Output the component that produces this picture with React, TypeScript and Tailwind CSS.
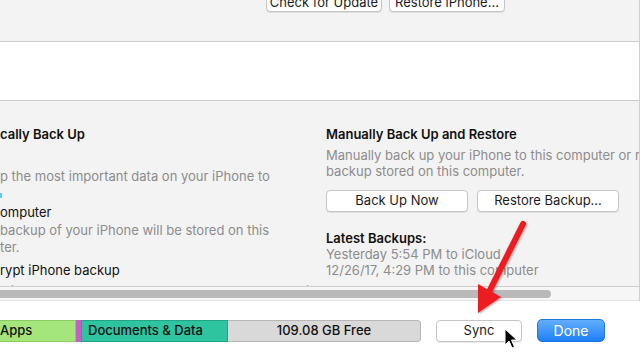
import React from 'react';

const Btn = ({ children, className = '' }: { children: React.ReactNode; className?: string }) => (
    <div className={`flex items-center justify-center h-[22px] bg-white border border-[#c5c5c5] rounded-[4px] shadow-[0_1px_0_rgba(0,0,0,0.08)] text-[13px] text-[#1c1c1c] ${className}`}>
        {children}
    </div>
);

const App = () => {
    return (
        <div className="relative w-[641px] h-[358px] overflow-hidden bg-white" style={{ fontFamily: 'Inter, "Liberation Sans", sans-serif' }}>
            <div className="w-[640px] border-r border-[#cfcfcf]">
                {/* top strip with update buttons, scrolled partly out of view */}
                <div className="h-[42px] bg-[#f3f3f3] border-b border-[#cdcdcd] flex items-start">
                    <div className="flex gap-[7px] ml-[266px] -mt-[10px]">
                        <Btn className="w-[116px] pt-[4px]">Check for Update</Btn>
                        <Btn className="w-[116px] pt-[4px]">Restore iPhone...</Btn>
                    </div>
                </div>

                {/* empty white strip */}
                <div className="h-[59px] bg-white border-b border-[#cdcdcd]" />

                {/* backups panel */}
                <div className="h-[186px] bg-[#f3f3f3] border-b border-[#cdcdcd] overflow-hidden flex pt-[25px] text-[13px] whitespace-nowrap">
                    <div className="w-[326px] shrink-0">
                        <div className="leading-4 font-semibold text-[#111]">cally Back Up</div>
                        <div className="mt-[26px] leading-4 text-[#8c8c8c]">p the most important data on your iPhone to</div>
                        <div className="mt-[9px] w-[2px] h-[5px] bg-[#5ac8fa]" />
                        <div className="mt-[6px] leading-4 text-[#111]">omputer</div>
                        <div className="mt-[2px] leading-[17px] text-[#8c8c8c]">
                            <div>backup of your iPhone will be stored on this</div>
                            <div>ter.</div>
                        </div>
                        <div className="mt-[6px] leading-4 text-[#111]">rypt iPhone backup</div>
                        <div className="mt-[5px] leading-4 text-[#8c8c8c]">will allow account passwords, Health, and HomeKit</div>
                    </div>
                    <div className="flex-1 min-w-0">
                        <div className="leading-4 font-semibold text-[#111]">Manually Back Up and Restore</div>
                        <div className="mt-[5px] leading-4 text-[#8c8c8c]">
                            <div>Manually back up your iPhone to this computer or restore a</div>
                            <div>backup stored on this computer.</div>
                        </div>
                        <div className="flex gap-[9px] mt-[11px]">
                            <Btn className="w-[142px]">Back Up Now</Btn>
                            <Btn className="w-[142px]">Restore Backup...</Btn>
                        </div>
                        <div className="mt-[18px] leading-4 font-semibold text-[#111]">Latest Backups:</div>
                        <div className="leading-4 text-[#8c8c8c]">
                            <div>Yesterday 5:54 PM to iCloud</div>
                            <div>12/26/17, 4:29 PM to this computer</div>
                        </div>
                    </div>
                </div>

                {/* horizontal scrollbar */}
                <div className="h-[14px] bg-[#f6f6f6] border-b border-[#e4e4e4] flex items-start">
                    <div className="mt-[3px] -ml-[20px] w-[571px] h-[8px] rounded-full bg-[#b9b9b9]" />
                </div>
            </div>

            {/* bottom bar */}
            <div className="h-[57px] pt-[2px] flex items-center text-[13px]">
                <div className="w-[421px] h-[22px] flex">
                    <div className="w-[76px] h-full bg-[#a4e67c] border border-[#88cc62] border-l-0 flex items-center font-medium text-[#111]">Apps</div>
                    <div className="w-[5px] h-full bg-[#c55fc4]" />
                    <div className="w-[147px] h-full bg-[#2ec4a0] border border-[#23a585] flex items-center pl-[6px] font-medium text-[#111]">Documents &amp; Data</div>
                    <div className="flex-1 h-full bg-[#d9d9d9] border border-[#b7b7b7] border-l-0 rounded-r-[4px] flex items-center justify-center font-medium text-[#111]">109.08 GB Free</div>
                </div>
                <Btn className="ml-[15px] w-[86px]">Sync</Btn>
                <div className="ml-[15px] w-[68px] h-[23px] rounded-[5px] bg-gradient-to-b from-[#62aefc] to-[#1b7ef6] border border-[#1f76e0] flex items-center justify-center text-[14px] text-white">Done</div>
            </div>

            {/* red annotation arrow */}
            <svg className="absolute left-0 top-0 pointer-events-none" width="641" height="358">
                <defs>
                    <filter id="sh" x="-20%" y="-20%" width="140%" height="140%">
                        <feDropShadow dx="1" dy="1" stdDeviation="1" floodColor="#000" floodOpacity="0.35" />
                    </filter>
                </defs>
                <g filter="url(#sh)">
                    <line x1="523" y1="224" x2="489" y2="292" stroke="#ec1c24" strokeWidth="6" strokeLinecap="round" />
                    <polygon points="478,313 501,297 478,284" fill="#ec1c24" />
                </g>
                {/* mouse pointer */}
                <path d="M505 329 L505 345 L509 341 L512 348 L514.5 347 L511.5 340 L517 340 Z" fill="#000" stroke="#fff" strokeWidth="1" strokeLinejoin="round" />
            </svg>
        </div>
    );
};

export default App;
